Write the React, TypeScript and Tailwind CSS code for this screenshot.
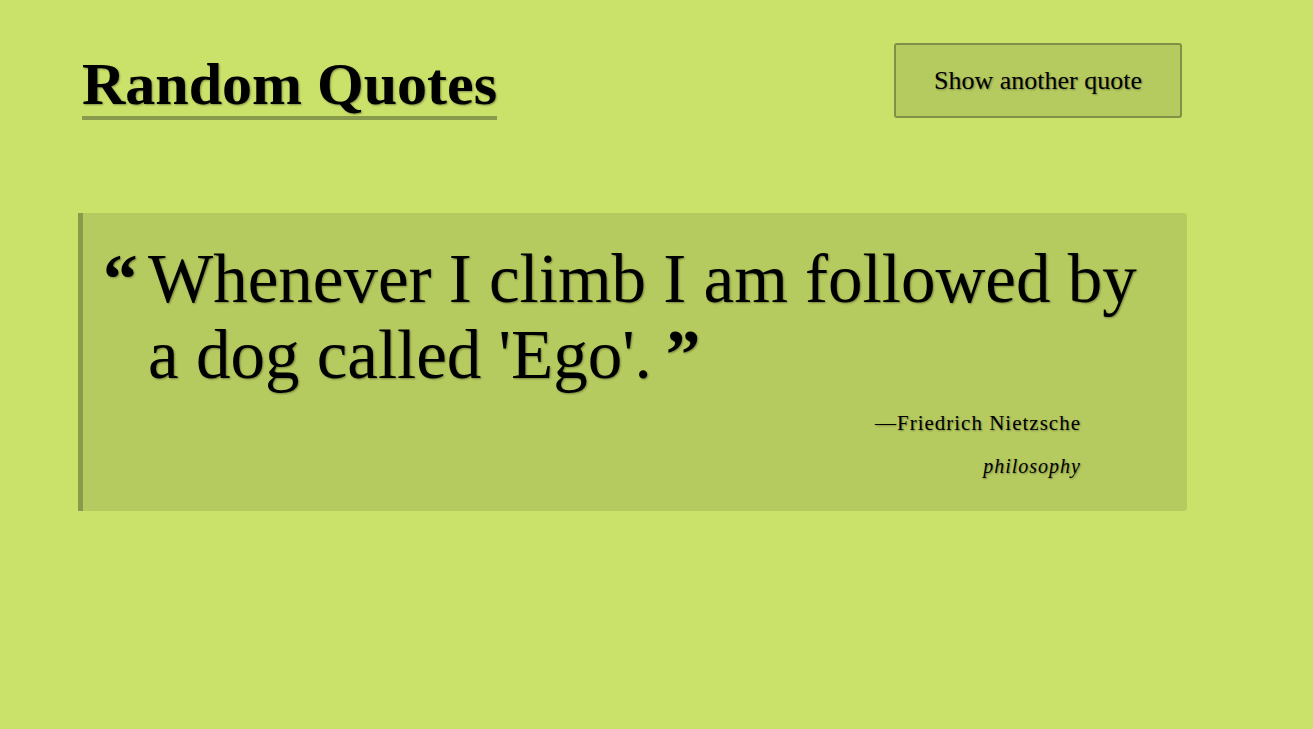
export default function App() {
  const shadow = '[text-shadow:1px_1px_2px_rgba(0,0,0,0.35)]';
  return (
    <div className="min-h-[729px] w-full bg-[#cbe26a] text-black font-['Liberation_Serif',serif]">
      <div className="w-[1109px] ml-[78px] pt-[43px]">
        {/* header */}
        <header className="flex items-start justify-between">
          <h1
            className={`ml-[4px] mt-[9px] text-[60px] font-bold leading-[64px] border-b-4 border-[#889a4b] ${shadow}`}
          >
            Random Quotes
          </h1>
          <button
            className={`mr-[5px] h-[75px] w-[288px] rounded-[3px] border-2 border-[#7f9047] bg-[#b6cb5f] text-[26px] ${shadow}`}
          >
            Show another quote
          </button>
        </header>

        {/* quote card */}
        <div className="mt-[93px] rounded-r-[3px] border-l-[5px] border-[#889a4b] bg-[#b6cb5f] pl-[20px] pr-[30px] pt-[28px] pb-[31px]">
          <div className={`flex text-[69px] leading-[76px] ${shadow}`}>
            <span className="w-[45px] shrink-0 font-bold">“</span>
            <p>
              Whenever I climb I am followed by a dog called 'Ego'.
              <span className="ml-[14px] inline-block font-bold">”</span>
            </p>
          </div>
          <div className="mt-[16px] pr-[76px] text-right">
            <p className={`text-[21px] leading-[28px] tracking-[1px] ${shadow}`}>—Friedrich Nietzsche</p>
            <p className={`mt-[15px] text-[20px] italic leading-[28px] tracking-[1px] ${shadow}`}>philosophy</p>
          </div>
        </div>
      </div>
    </div>
  );
}
